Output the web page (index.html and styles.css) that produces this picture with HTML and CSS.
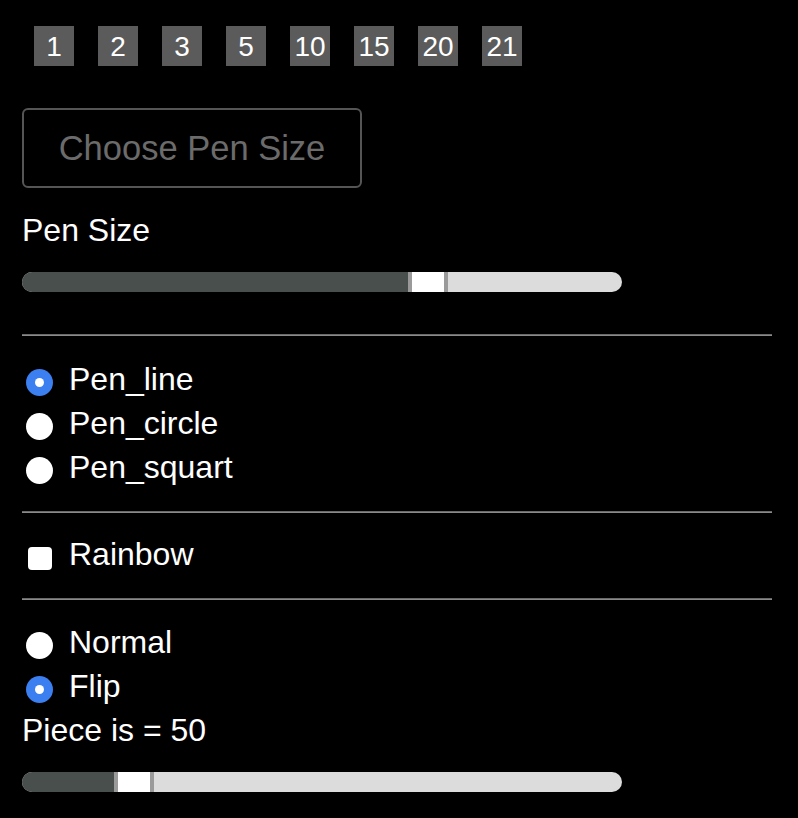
FILE: index.html
```html
<!DOCTYPE html>
<html>
<head>
<meta charset="utf-8">
<link rel="stylesheet" href="styles.css">
</head>
<body>
<div class="panel">
  <div class="sizes">
    <span class="size">1</span>
    <span class="size">2</span>
    <span class="size">3</span>
    <span class="size">5</span>
    <span class="size">10</span>
    <span class="size">15</span>
    <span class="size">20</span>
    <span class="size">21</span>
  </div>
  <button class="choose">Choose Pen Size</button>
  <div class="label pen-label">Pen Size</div>
  <input class="slider slider-pen" type="range" min="0" max="560" value="386">
  <hr class="rule rule-1">
  <label class="row"><input class="radio" type="radio" name="pen" checked><span>Pen_line</span></label>
  <label class="row"><input class="radio" type="radio" name="pen"><span>Pen_circle</span></label>
  <label class="row"><input class="radio" type="radio" name="pen"><span>Pen_squart</span></label>
  <hr class="rule rule-2">
  <label class="row check-row"><input class="check" type="checkbox"><span>Rainbow</span></label>
  <hr class="rule rule-3">
  <label class="row"><input class="radio" type="radio" name="mode"><span>Normal</span></label>
  <label class="row"><input class="radio" type="radio" name="mode" checked><span>Flip</span></label>
  <div class="label">Piece is = 50</div>
  <input class="slider slider-piece" type="range" min="0" max="560" value="92">
</div>
</body>
</html>
```
FILE: styles.css
```css
html, body {
  margin: 0;
  padding: 0;
  background: #000;
}
body {
  font-family: "Liberation Sans", Arial, Helvetica, sans-serif;
  color: #fff;
  font-size: 32px;
}
.panel {
  width: 750px;
  padding: 26px 0 0 22px;
  display: flex;
  flex-direction: column;
  align-items: flex-start;
}
.sizes {
  display: flex;
  gap: 24px;
  padding-left: 12px;
}
.size {
  width: 40px;
  height: 40px;
  background: #5b5b5b;
  color: #fff;
  font-size: 28px;
  line-height: 41px;
  text-align: center;
}
.choose {
  margin-top: 42px;
  width: 340px;
  height: 80px;
  box-sizing: border-box;
  background: #000;
  border: 2px solid #555;
  border-radius: 6px;
  color: #6b6b6b;
  font-family: inherit;
  font-size: 34.5px;
  padding: 0;
}
.label {
  line-height: 44px;
  height: 44px;
}
.pen-label {
  margin-top: 20px;
}
.slider {
  -webkit-appearance: none;
  appearance: none;
  margin: 20px 0 0 0;
  width: 600px;
  height: 20px;
  border-radius: 10px;
  background: #dcdcdc;
  overflow: hidden;
  padding: 0;
  outline: none;
}
.slider::-webkit-slider-runnable-track {
  height: 20px;
  background: transparent;
}
.slider::-webkit-slider-thumb {
  -webkit-appearance: none;
  appearance: none;
  width: 40px;
  height: 20px;
  box-sizing: border-box;
  background: #fff;
  border-left: 4px solid #9a9a9a;
  border-right: 4px solid #9a9a9a;
  border-top: none;
  border-bottom: none;
  box-shadow: -610px 0 0 600px #484f4d;
}
.rule {
  width: 750px;
  height: 0;
  margin: 42px 0 21px 0;
  border: none;
  border-top: 1px solid #6a6a6a;
  border-bottom: 1px solid #8a8a8a;
}
.rule-2 {
  margin-top: 22px;
  margin-bottom: 19px;
}
.rule-3 {
  margin-top: 22px;
  margin-bottom: 20px;
}
.row {
  display: flex;
  align-items: flex-start;
  height: 44px;
  line-height: 44px;
}
.radio {
  -webkit-appearance: none;
  appearance: none;
  width: 27px;
  height: 27px;
  margin: 12px 16px 0 4px;
  border-radius: 50%;
  background: #fff;
  position: relative;
  flex: none;
}
.radio:checked {
  background: #3b7ff0;
}
.radio:checked::after {
  content: "";
  position: absolute;
  left: 9px;
  top: 9px;
  width: 9px;
  height: 9px;
  border-radius: 50%;
  background: #fff;
}
.check {
  -webkit-appearance: none;
  appearance: none;
  width: 24px;
  height: 23px;
  margin: 15px 17px 0 6px;
  border-radius: 4px;
  background: #fff;
  flex: none;
}
```
